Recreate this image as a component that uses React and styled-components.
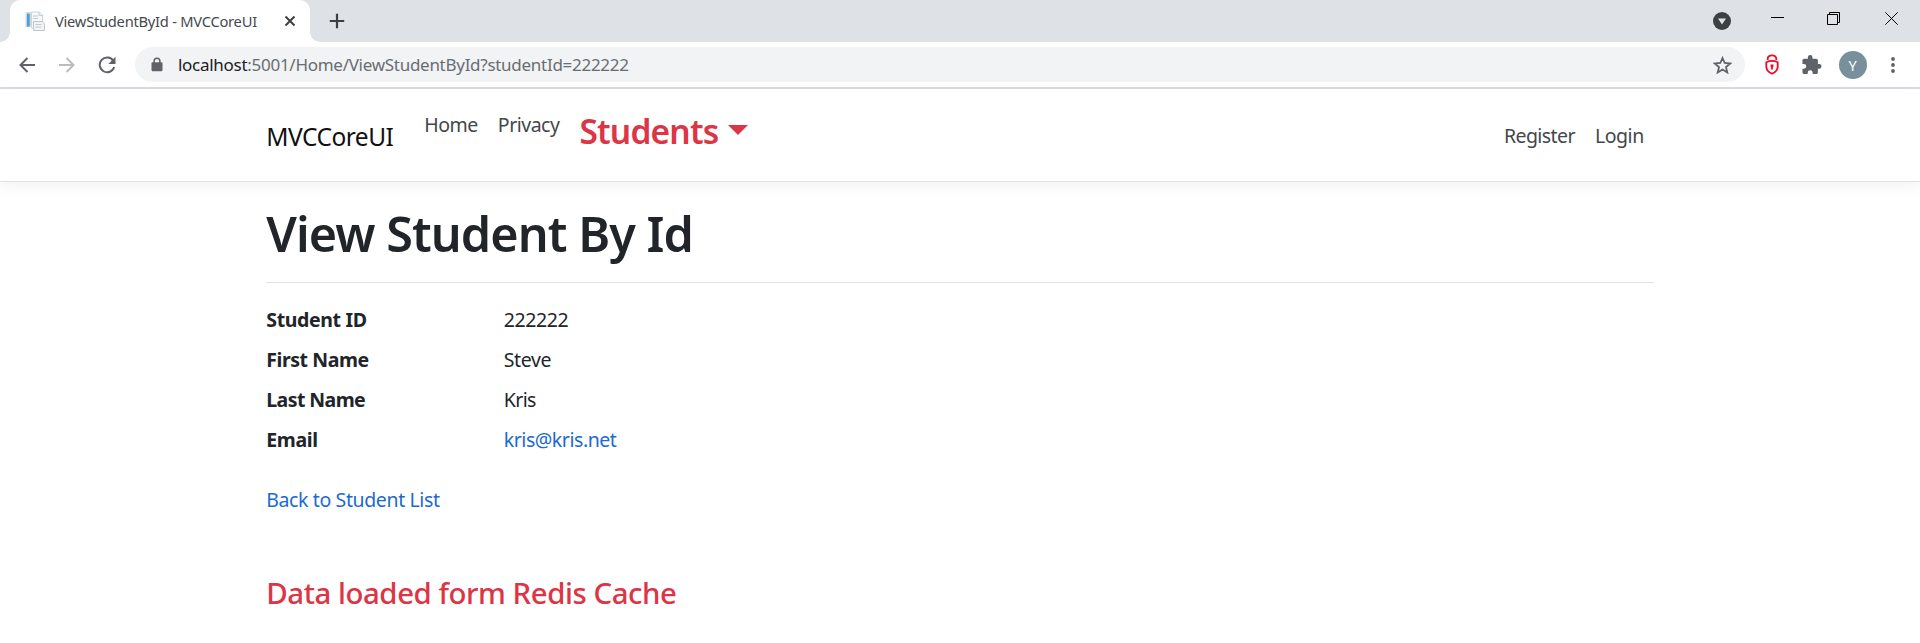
import React from "react";
import styled, { createGlobalStyle } from "styled-components";

const GlobalStyle = createGlobalStyle`
  *, *::before, *::after { box-sizing: border-box; }
  body {
    margin: 0;
    background: #fff;
    color: #212529;
    font: 400 19.5px/30px "Noto Sans", "Open Sans", sans-serif;
  }
  a { color: inherit; text-decoration: none; }
`;

const Page = styled.div`
  min-height: 643px;
  overflow: hidden;
`;

const Tracked = styled.span`
  letter-spacing: ${({ $ls }) => $ls || 0}px;
  white-space: nowrap;
`;

/* Browser frame */
const TabStrip = styled.div`
  display: flex;
  height: 42px;
  padding-left: 10px;
  background: #dee1e6;
`;

const Tab = styled.div`
  position: relative;
  display: flex;
  align-items: center;
  width: 300px;
  padding: 0 11px 0 15px;
  border-radius: 10px 10px 0 0;
  background: #fff;
  color: #45494d;
  font-size: 14.7px;
  line-height: 21px;

  &::before, &::after {
    content: "";
    position: absolute;
    bottom: 0;
    width: 10px;
    height: 10px;
  }
  &::before {
    left: -10px;
    background: radial-gradient(circle at 0 0, transparent 9.5px, #fff 10px);
  }
  &::after {
    right: -10px;
    background: radial-gradient(circle at 100% 0, transparent 9.5px, #fff 10px);
  }
`;

const TabTitle = styled(Tracked)`
  flex: 1;
  margin-left: 10px;
`;

const IconSlot = styled.span`
  display: flex;
  flex: none;
  align-items: center;
  justify-content: center;
  width: ${({ $w }) => $w}px;
  height: ${({ $h }) => $h || 42}px;
`;

const Spacer = styled.div`
  flex: 1;
`;

const Toolbar = styled.div`
  display: flex;
  align-items: center;
  height: 47px;
  padding: 0 8px 0 7px;
  border-bottom: 2px solid #dadbe0;
  background: #fff;
`;

const AddressBar = styled.div`
  display: flex;
  flex: 1;
  align-items: center;
  height: 35px;
  margin-left: 8px;
  padding: 0 2px 0 12px;
  border-radius: 18px;
  background: #f1f3f4;
  color: #696d71;
  font-size: 17px;
  line-height: 26px;
`;

const Url = styled(Tracked)`
  flex: 1;
  margin-left: 11px;
`;

const Host = styled.span`
  color: #202124;
`;

const Avatar = styled.span`
  display: flex;
  align-items: center;
  justify-content: center;
  width: 28px;
  height: 28px;
  border-radius: 50%;
  background: #78909c;
  color: #fff;
  font-size: 14.5px;
  line-height: 28px;
`;

/* Site */
const Container = styled.div`
  width: 1387.5px;
  margin: 0 auto;
`;

const SiteHeader = styled.header`
  height: 93px;
  border-bottom: 1px solid #dee2e6;
  box-shadow: 0 5px 15px rgba(0, 0, 0, 0.05);
`;

const Nav = styled(Container)`
  display: flex;
  align-items: center;
  height: 92px;
  padding-top: 2px;
`;

const Brand = styled.a`
  width: 127px;
  margin: 2px 21px 0 0;
  color: #111;
  font-size: 24.5px;
  line-height: 38px;
`;

const NavList = styled.div`
  display: flex;
  align-items: flex-start;
  height: ${({ $tall }) => ($tall ? 52 : 30)}px;
`;

const NavLink = styled.a`
  padding: 0 10px;
  color: #43474a;
`;

const Dropdown = styled.a`
  display: flex;
  padding-left: 10px;
  color: #dc3545;
  font-size: 33.5px;
  font-weight: 600;
  line-height: 42px;

  &::after {
    content: "";
    margin: 15px 0 0 9.5px;
    height: 0;
    border: 10.5px solid transparent;
    border-top-color: #dc3545;
    border-bottom: 0;
  }
`;

const Title = styled.h1`
  margin: 0;
  padding-top: 21px;
  height: 101px;
  border-bottom: 1px solid #e1e2e3;
  font-size: 48.5px;
  font-weight: 600;
  line-height: 60px;
`;

const Details = styled.dl`
  display: grid;
  grid-template-columns: 237.5px 1fr;
  row-gap: 10px;
  margin: 22px 0 0;
`;

const Term = styled.dt`
  font-weight: 700;
`;

const Value = styled.dd`
  margin: 0;
`;

const Link = styled.a`
  color: #1b6ad2;
`;

const Back = styled.div`
  margin-top: 30px;
`;

const Notice = styled.h3`
  margin: 60px 0 0;
  color: #dc3545;
  font-size: 29.4px;
  font-weight: 500;
  line-height: 36px;
`;

const line = { fill: "none", stroke: "#5f6368", strokeWidth: 2 };

const PageIcon = () => (
  <svg width="20" height="20" viewBox="0 0 20 20">
    <path d="M1 1.500h4.500v14H1z" fill="#f5f7f9" stroke="#d3d8dd" />
    <path d="M1.800 2.500h3v13h-3z" fill="#4d9fd0" />
    <path d="M6.500 1h8l3 3v13h-11z" fill="#f7f8fa" stroke="#d0d5da" />
    <path d="M14 1v3.500h3.500M8 5h5M8 7.500h5" fill="none" stroke="#c5cbd2" />
    <path d="M8.500 10.500h8.500l2.500 2v7h-11z" fill="#f1f4f7" stroke="#c0c6ce" />
    <path d="M10.500 13.500h6M10.500 16h6" stroke="#c3c9d1" />
  </svg>
);

const CloseTab = () => (
  <svg width="12" height="12" viewBox="0 0 12 12">
    <path d="M1.500 1.500l9 9M10.500 1.500l-9 9" stroke="#3c4043" strokeWidth="2" />
  </svg>
);

const Plus = () => (
  <svg width="16" height="16" viewBox="0 0 16 16">
    <path d="M8 .8v14.400M.8 8h14.400" stroke="#3c4043" strokeWidth="2.2" />
  </svg>
);

const Arrow = ({ forward }) => (
  <svg width="16" height="16" viewBox="0 0 16 16">
    <path
      d={forward ? "M0 8h14.500M7.500 1l7 7-7 7" : "M16 8H1.500M8.500 1l-7 7 7 7"}
      {...line}
      stroke={forward ? "#babcbe" : "#5f6368"}
    />
  </svg>
);

const Reload = () => (
  <svg width="18" height="18" viewBox="0 0 18 18">
    <path d="M15.200 4.600A7.400 7.400 0 1 0 16.200 11" {...line} />
    <path d="M17.500 .8v7.200h-7.200z" fill="#5f6368" />
  </svg>
);

const Lock = () => (
  <svg width="12" height="15" viewBox="0 0 12 15">
    <path d="M3.100 6V4.200a2.900 2.900 0 0 1 5.800 0V6" fill="none" stroke="#5f6368" strokeWidth="1.5" />
    <rect x=".5" y="5.3" width="11" height="9" rx="1.2" fill="#5f6368" />
  </svg>
);

const Star = () => (
  <svg width="19" height="18" viewBox="0 0 19 18">
    <path d="M9.500 2l2.200 5 5.500.5-4.200 3.600 1.300 5.400-4.800-2.900-4.800 2.900L6 11.100 1.800 7.500 7.300 7z" {...line} strokeWidth="1.8" />
  </svg>
);

const RedLock = () => (
  <svg width="14" height="21" viewBox="0 0 14 21">
    <path d="M2.700 6V4.900C2.700 2.700 4.600 1.300 7 1.300s4.300 1.400 4.300 3.600V6" fill="none" stroke="#f00824" strokeWidth="1.8" />
    <path d="M1.300 8.200C4.600 6.600 9.400 6.600 12.700 8.200v4.600c0 3.300-2.600 5.600-5.700 7-3.100-1.400-5.700-3.700-5.700-7z" fill="none" stroke="#f00824" strokeWidth="1.8" />
    <path d="M5.500 10.500h3v2l-.6.5v2.500H6.100V13l-.6-.5z" fill="#f00824" />
  </svg>
);

const Puzzle = () => (
  <svg width="20" height="20" viewBox="1.5 1 22 22">
    <path d="M20.500 11H19V7c0-1.100-.9-2-2-2h-4V3.500a2.500 2.500 0 0 0-5 0V5H4c-1.100 0-2 .9-2 2v3.800h1.500a2.700 2.700 0 0 1 0 5.400H2V20c0 1.100.9 2 2 2h3.800v-1.500a2.700 2.700 0 0 1 5.400 0V22H17c1.100 0 2-.9 2-2v-4h1.500a2.500 2.500 0 0 0 0-5z" fill="#5f6368" />
  </svg>
);

const Dots = () => (
  <svg width="4" height="16" viewBox="0 0 4 16" fill="#5f6368">
    <circle cx="2" cy="2" r="1.9" />
    <circle cx="2" cy="8" r="1.9" />
    <circle cx="2" cy="14" r="1.9" />
  </svg>
);

const TabSearch = () => (
  <svg width="18" height="18" viewBox="0 0 18 18">
    <circle cx="9" cy="9" r="9" fill="#3c4043" />
    <path d="M5 6.500h8L9 12.500z" fill="#dee1e6" />
  </svg>
);

const WindowIcon = ({ d }) => (
  <svg width="13" height="13" viewBox="0 0 13 13">
    <path d={d} fill="none" stroke="#000" strokeWidth="1" />
  </svg>
);

const WindowButtons = styled.div`
  display: flex;
  height: 37px;
`;

const windowButtons = [
  { id: "minimize", w: 56, d: "M0 5.500h13" },
  { id: "restore", w: 57, d: "M.5 2.500h10v10H.5zM2.500 2.500v-2h10v10h-2" },
  { id: "close", w: 58, d: "M.3 .3l12.400 12.400M12.700 .3L.3 12.700" },
];

const student = [
  { label: "Student ID", ls: -0.36, value: "222222", vls: -0.38 },
  { label: "First Name", ls: -0.42, value: "Steve", vls: -0.4 },
  { label: "Last Name", ls: -0.58, value: "Kris", vls: -0.6 },
  { label: "Email", ls: -0.35, value: "kris@kris.net", vls: -0.45, link: true },
];

export default function App() {
  return (
    <Page>
      <GlobalStyle />
      <TabStrip>
        <Tab>
          <PageIcon />
          <TabTitle $ls={-0.25}>ViewStudentById - MVCCoreUI</TabTitle>
          <IconSlot $w={18}><CloseTab /></IconSlot>
        </Tab>
        <IconSlot $w={54}><Plus /></IconSlot>
        <Spacer />
        <IconSlot $w={44}><TabSearch /></IconSlot>
        <IconSlot $w={5} />
        <WindowButtons>
          {windowButtons.map(({ id, w, d }) => (
            <IconSlot key={id} $w={w} $h={37}><WindowIcon d={d} /></IconSlot>
          ))}
        </WindowButtons>
      </TabStrip>
      <Toolbar>
        <IconSlot $w={40}><Arrow /></IconSlot>
        <IconSlot $w={40}><Arrow forward /></IconSlot>
        <IconSlot $w={40}><Reload /></IconSlot>
        <AddressBar>
          <IconSlot $w={20}><Lock /></IconSlot>
          <Url $ls={-0.28}>
            <Host>localhost</Host>:5001/Home/ViewStudentById?studentId=222222
          </Url>
          <IconSlot $w={41}><Star /></IconSlot>
        </AddressBar>
        <IconSlot $w={7} />
        <IconSlot $w={40}><RedLock /></IconSlot>
        <IconSlot $w={40}><Puzzle /></IconSlot>
        <IconSlot $w={41}><Avatar>Y</Avatar></IconSlot>
        <IconSlot $w={39}><Dots /></IconSlot>
      </Toolbar>

      <SiteHeader>
        <Nav>
          <Brand href="#"><Tracked $ls={-0.5}>MVCCoreUI</Tracked></Brand>
          <NavList $tall>
            <NavLink href="#"><Tracked $ls={-0.47}>Home</Tracked></NavLink>
            <NavLink href="#"><Tracked $ls={-0.5}>Privacy</Tracked></NavLink>
            <Dropdown href="#"><Tracked $ls={-0.8}>Students</Tracked></Dropdown>
          </NavList>
          <Spacer />
          <NavList>
            <NavLink href="#"><Tracked $ls={-0.58}>Register</Tracked></NavLink>
            <NavLink href="#"><Tracked $ls={-0.45}>Login</Tracked></NavLink>
          </NavList>
        </Nav>
      </SiteHeader>

      <Container as="main">
        <Title><Tracked $ls={-0.92}>View Student By Id</Tracked></Title>
        <Details>
          {student.map(({ label, ls, value, vls, link }) => (
            <React.Fragment key={label}>
              <Term><Tracked $ls={ls}>{label}</Tracked></Term>
              <Value>
                <Tracked $ls={vls}>
                  {link ? <Link href="#">{value}</Link> : value}
                </Tracked>
              </Value>
            </React.Fragment>
          ))}
        </Details>
        <Back>
          <Link href="#"><Tracked $ls={-0.38}>Back to Student List</Tracked></Link>
        </Back>
        <Notice><Tracked $ls={-0.45}>Data loaded form Redis Cache</Tracked></Notice>
      </Container>
    </Page>
  );
}
